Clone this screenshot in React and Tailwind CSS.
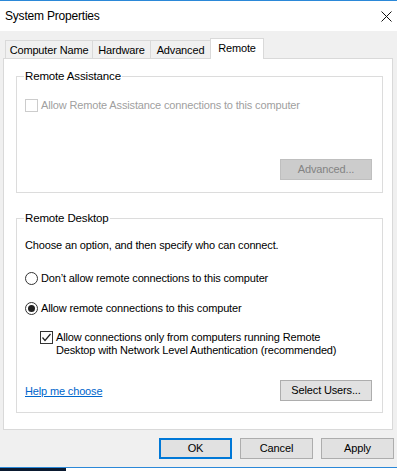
import React from 'react';

const FONT = { fontFamily: '"Liberation Sans", Arial, sans-serif' };

const Checkbox = ({ checked, disabled }) => (
    <div className={`w-[13px] h-[13px] shrink-0 border bg-white flex items-center justify-center ${disabled ? 'border-[#cccccc]' : 'border-[#333333]'}`}>
        {checked && (
            <svg width="11" height="11" viewBox="0 0 11 11">
                <polyline points="1.5,5.5 4,8.5 9.5,2" fill="none" stroke="#222" strokeWidth="1.2" />
            </svg>
        )}
    </div>
);

const Radio = ({ checked }) => (
    <div className="w-[13px] h-[13px] shrink-0 rounded-full border border-[#333333] bg-white flex items-center justify-center">
        {checked && <div className="w-[7px] h-[7px] rounded-full bg-[#222222]" />}
    </div>
);

const Group = ({ label, className, children }) => (
    <div className={`relative border border-[#dcdcdc] ${className}`}>
        <span className="absolute -top-[8px] left-[7px] bg-white px-[1px] leading-[15px] text-[11.5px] text-black whitespace-nowrap">{label}</span>
        {children}
    </div>
);

const DialogButton = ({ children, primary, wide }) => (
    <button className={`${wide ? 'w-[92px]' : 'w-[73px]'} h-[21px] bg-[#e1e1e1] text-black leading-[15px] whitespace-nowrap ${primary ? 'border-2 border-[#0078d7]' : 'border border-[#adadad]'}`}>
        {children}
    </button>
);

export default function App() {
    return (
        <div className="w-[397px] h-[471px] overflow-hidden bg-white text-[11px] tracking-[-0.15px] text-black flex flex-col" style={FONT}>
            {/* window */}
            <div className="h-[468px] flex flex-col border-t border-b border-[#2b88d8]">
                {/* title bar */}
                <div className="h-[30px] bg-white flex items-center justify-between pl-[5px] pr-[5px]">
                    <span className="leading-[15px] text-[12px] tracking-[-0.2px]">System Properties</span>
                    <svg width="11" height="11" viewBox="0 0 11 11">
                        <path d="M0.5 0.5 L10.5 10.5 M10.5 0.5 L0.5 10.5" stroke="#111" strokeWidth="1" />
                    </svg>
                </div>

                {/* body */}
                <div className="flex-1 bg-[#f0f0f0] pt-[7px] pl-[3px] pr-[4px] flex flex-col">
                    {/* tabs */}
                    <div className="h-[20px] flex items-end ml-[2px] whitespace-nowrap">
                        <div className="w-[88px] h-[18px] border border-b-0 border-[#d9d9d9] text-center leading-[15px] pt-[2px]">Computer Name</div>
                        <div className="w-[58px] h-[18px] border-t border-r border-[#d9d9d9] text-center leading-[15px] pt-[2px]">Hardware</div>
                        <div className="w-[60px] h-[18px] border-t border-r border-[#d9d9d9] text-center leading-[15px] pt-[2px]">Advanced</div>
                        <div className="relative z-10 -ml-px -mb-px w-[54px] h-[21px] border border-b-0 border-[#d9d9d9] bg-white text-center leading-[15px] pt-[2px]">Remote</div>
                    </div>

                    {/* tab panel */}
                    <div className="h-[372px] border border-[#d9d9d9] bg-white pt-[17px] pl-[12px] pr-[9px] flex flex-col">
                        <Group label="Remote Assistance" className="h-[117px] pt-[22px] pl-[8px] pr-[10px] flex flex-col">
                            <div className="h-[13px] flex items-center gap-[3px]">
                                <Checkbox disabled />
                                <span className="leading-[15px] text-[#a0a0a0]">Allow Remote Assistance connections to this computer</span>
                            </div>
                            <div className="mt-[47px] flex justify-end">
                                <button className="w-[92px] h-[21px] bg-[#cccccc] border border-[#bfbfbf] text-[#838383] leading-[15px]">Advanced...</button>
                            </div>
                        </Group>

                        <Group label="Remote Desktop" className="mt-[25px] h-[195px] pt-[19px] pl-[8px] pr-[10px] flex flex-col">
                            <p className="leading-[15px]">Choose an option, and then specify who can connect.</p>
                            <div className="mt-[19px] h-[13px] flex items-center gap-[3px]">
                                <Radio />
                                <span className="leading-[15px]">Don’t allow remote connections to this computer</span>
                            </div>
                            <div className="mt-[17px] h-[13px] flex items-center gap-[3px]">
                                <Radio checked />
                                <span className="leading-[15px]">Allow remote connections to this computer</span>
                            </div>
                            <div className="mt-[16px] ml-[15px] flex items-start gap-[3px]">
                                <Checkbox checked />
                                <span className="leading-[13px]">
                                    Allow connections only from computers running Remote<br />
                                    Desktop with Network Level Authentication (recommended)
                                </span>
                            </div>
                            <div className="mt-[23px] flex items-center justify-between">
                                <a className="text-[#0066cc] underline leading-[15px] mt-[2px]">Help me choose</a>
                                <DialogButton wide>Select Users...</DialogButton>
                            </div>
                        </Group>
                    </div>

                    {/* dialog buttons */}
                    <div className="mt-[8px] -mr-px flex justify-end gap-[8px]">
                        <DialogButton primary>OK</DialogButton>
                        <DialogButton>Cancel</DialogButton>
                        <DialogButton>Apply</DialogButton>
                    </div>
                </div>
            </div>

            {/* taskbar sliver below the window */}
            <div className="h-[3px] flex">
                <div className="w-[66px] bg-[#0b1a30]" />
            </div>
        </div>
    );
}
